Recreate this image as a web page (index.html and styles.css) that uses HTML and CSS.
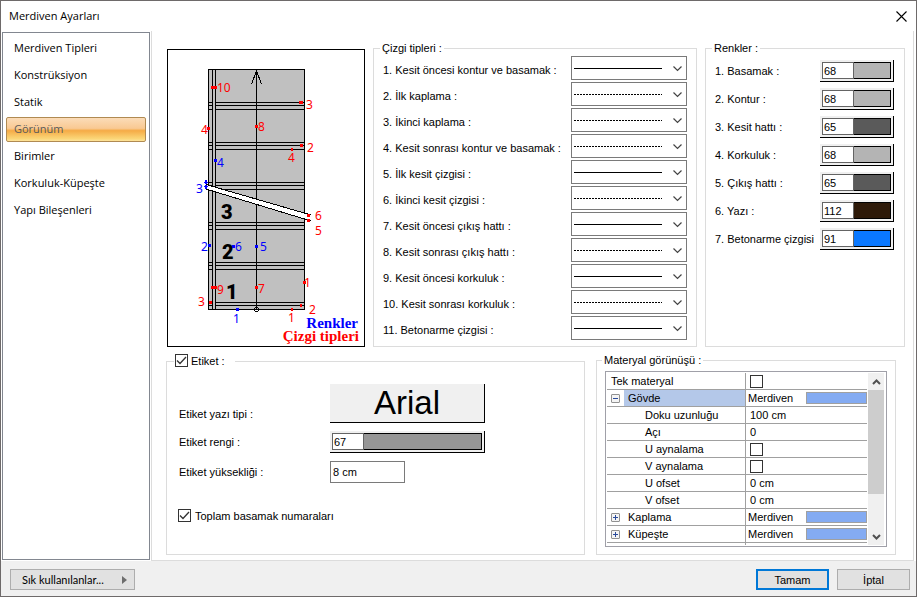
FILE: index.html
```
<!DOCTYPE html>
<html lang="tr">
    <head>
        <title>Merdiven Ayarları</title>
        <meta charset="utf-8">
        <link rel="stylesheet" href="styles.css">
    </head>
    <body>

    <div class="dialog">
        <div class="titlebar">
            <h1>Merdiven Ayarları</h1>
            <button class="close" type="button" aria-label="Kapat">
                <svg width="11" height="11" viewBox="0 0 11 11"><path d="M.5 .5l10 10M10.5 .5l-10 10" fill="none" stroke="#000" stroke-width="1.100"/></svg>
            </button>
        </div>

        <div class="main">
            <nav class="menu">
                <a href="#tipler">Merdiven Tipleri</a>
                <a href="#konstruksiyon">Konstrüksiyon</a>
                <a href="#statik">Statik</a>
                <a href="#gorunum" class="active">Görünüm</a>
                <a href="#birimler">Birimler</a>
                <a href="#korkuluk">Korkuluk-Küpeşte</a>
                <a href="#yapi">Yapı Bileşenleri</a>
            </nav>

            <div class="page">
                <div class="row top">
                    <div class="preview">
                        <svg viewBox="168 50 196 296">
                            <g shape-rendering="crispEdges">
                                <path d="M208.500 69.500h96v240h-96z" fill="#c0c0c0" stroke="#000"/>
                                <!-- basamaklar -->
                                <path d="M208 102.500h96M208 105.500h96M208 109.500h96M208 142.500h96M208 145.500h96M208 149.500h96M208 182.500h96M208 185.500h96M208 189.500h96M208 222.500h96M208 225.500h96M208 229.500h96M208 262.500h96M208 265.500h96M208 269.500h96M208 302.500h96M208 305.500h96" fill="none" stroke="#000"/>
                                <!-- korkuluk -->
                                <path d="M212.500 69.500h3v240h-3z" fill="#c0c0c0" stroke="#000"/>
                                <!-- çıkış hattı -->
                                <path d="M256.500 69v240M256.500 71l-5 13M256.500 71l5 13M255 72.500h3" fill="none" stroke="#000"/>
                                <path d="M255 307.500h3M255 311.500h3M254.500 308v3M258.500 308v3" fill="none" stroke="#000"/>
                                <!-- kesit -->
                                <path d="M206 184.500L311 215V221L206 189Z" fill="#fff"/>
                                <path d="M206 184.500L311 215M206 189L311 221" fill="none" stroke="#000"/>
                                <path fill="#f00" d="M211 86h6v3h-6zM299 101h4v3h-4zM207 127h3v3h-3zM255 125h3v3h-3zM300 144h3v3h-3zM291 148h2v3h-2zM307 214h3v3h-3zM307 219h3v3h-3zM211 286h6v3h-6zM255 286h3v3h-3zM303 281h3v3h-3zM209 301h3v3h-3zM300 304h2v3h-2zM291 308h2v3h-2z"/>
                                <path fill="#00f" d="M214 159h3v3h-3zM205 180h2v4h-2zM205 185h2v4h-2zM204 182h4v1h-4zM204 186h4v1h-4zM208 244h3v3h-3zM232 245h3v3h-3zM255 245h3v3h-3zM236 308h3v3h-3z"/>
                            </g>
                            <g class="step">
                                <text x="221" y="219">3</text>
                                <text x="222" y="259">2</text>
                                <text x="226" y="299">1</text>
                            </g>
                            <g class="mark red">
                                <text x="217" y="92">10</text>
                                <text x="306" y="109">3</text>
                                <text x="258" y="131">8</text>
                                <text x="201" y="134">4</text>
                                <text x="307" y="152">2</text>
                                <text x="288" y="162">4</text>
                                <text x="315" y="220">6</text>
                                <text x="315" y="235">5</text>
                                <text x="217" y="294">9</text>
                                <text x="258" y="293">7</text>
                                <text x="304" y="287">1</text>
                                <text x="198" y="306">3</text>
                                <text x="309" y="314">2</text>
                                <text x="288" y="322">1</text>
                            </g>
                            <g class="mark blue">
                                <text x="217" y="167">4</text>
                                <text x="196" y="193">3</text>
                                <text x="201" y="251">2</text>
                                <text x="235" y="251">6</text>
                                <text x="260" y="251">5</text>
                                <text x="233" y="323">1</text>
                            </g>
                            <g class="caption">
                                <text class="blue" x="358" y="328" text-anchor="end">Renkler</text>
                                <text class="red" x="359" y="341" text-anchor="end">Çizgi tipleri</text>
                            </g>
                        </svg>
                    </div>

                    <fieldset class="lines">
                        <legend>Çizgi tipleri :</legend>
                        <div class="line"><label for="l1">1. Kesit öncesi kontur ve basamak :</label><select id="l1" class="solid"><option></option></select></div>
                        <div class="line"><label for="l2">2. İlk kaplama :</label><select id="l2" class="dashed"><option></option></select></div>
                        <div class="line"><label for="l3">3. İkinci kaplama :</label><select id="l3" class="dashed"><option></option></select></div>
                        <div class="line"><label for="l4">4. Kesit sonrası kontur ve basamak :</label><select id="l4" class="dashed"><option></option></select></div>
                        <div class="line"><label for="l5">5. İlk kesit çizgisi :</label><select id="l5" class="solid"><option></option></select></div>
                        <div class="line"><label for="l6">6. İkinci kesit çizgisi :</label><select id="l6" class="dashed"><option></option></select></div>
                        <div class="line"><label for="l7">7. Kesit öncesi çıkış hattı :</label><select id="l7" class="solid"><option></option></select></div>
                        <div class="line"><label for="l8">8. Kesit sonrası çıkış hattı :</label><select id="l8" class="dashed"><option></option></select></div>
                        <div class="line"><label for="l9">9. Kesit öncesi korkuluk :</label><select id="l9" class="solid"><option></option></select></div>
                        <div class="line"><label for="l10">10. Kesit sonrası korkuluk :</label><select id="l10" class="dashed"><option></option></select></div>
                        <div class="line"><label for="l11">11. Betonarme çizgisi :</label><select id="l11" class="solid"><option></option></select></div>
                    </fieldset>

                    <fieldset class="colors">
                        <legend>Renkler :</legend>
                        <div class="color"><label for="c1">1. Basamak :</label><button id="c1" class="picker" type="button"><span>68</span><i class="c68"></i></button></div>
                        <div class="color"><label for="c2">2. Kontur :</label><button id="c2" class="picker" type="button"><span>68</span><i class="c68"></i></button></div>
                        <div class="color"><label for="c3">3. Kesit hattı :</label><button id="c3" class="picker" type="button"><span>65</span><i class="c65"></i></button></div>
                        <div class="color"><label for="c4">4. Korkuluk :</label><button id="c4" class="picker" type="button"><span>68</span><i class="c68"></i></button></div>
                        <div class="color"><label for="c5">5. Çıkış hattı :</label><button id="c5" class="picker" type="button"><span>65</span><i class="c65"></i></button></div>
                        <div class="color"><label for="c6">6. Yazı :</label><button id="c6" class="picker" type="button"><span>112</span><i class="c112"></i></button></div>
                        <div class="color"><label for="c7">7. Betonarme çizgisi</label><button id="c7" class="picker" type="button"><span>91</span><i class="c91"></i></button></div>
                    </fieldset>
                </div>

                <div class="row bottom">
                    <fieldset class="tag">
                        <legend><input type="checkbox" id="etiket" checked><label for="etiket">Etiket :</label></legend>
                        <div class="tagGrid">
                            <label for="font">Etiket yazı tipi :</label>
                            <button id="font" class="font" type="button">Arial</button>
                            <label for="renk">Etiket rengi :</label>
                            <button id="renk" class="picker" type="button"><span>67</span><i class="c67"></i></button>
                            <label for="yukseklik">Etiket yüksekliği :</label>
                            <input id="yukseklik" class="text" type="text" value="8 cm">
                        </div>
                        <div class="check"><input type="checkbox" id="toplam" checked><label for="toplam">Toplam basamak numaraları</label></div>
                    </fieldset>

                    <fieldset class="material">
                        <legend>Materyal görünüşü :</legend>
                        <div class="list">
                            <div class="rows">
                                <table>
                                    <tbody>
                                        <tr><th><label for="tek">Tek materyal</label></th><td><input type="checkbox" id="tek"></td></tr>
                                        <tr class="group selected"><th><div><button class="toggle minus" type="button" aria-label="Daralt"></button><span>Gövde</span></div></th><td><div>Merdiven<i class="swatch"></i></div></td></tr>
                                        <tr class="child"><th>Doku uzunluğu</th><td>100 cm</td></tr>
                                        <tr class="child"><th>Açı</th><td>0</td></tr>
                                        <tr class="child"><th><label for="u">U aynalama</label></th><td><input type="checkbox" id="u"></td></tr>
                                        <tr class="child"><th><label for="v">V aynalama</label></th><td><input type="checkbox" id="v"></td></tr>
                                        <tr class="child"><th>U ofset</th><td>0 cm</td></tr>
                                        <tr class="child"><th>V ofset</th><td>0 cm</td></tr>
                                        <tr class="group"><th><div><button class="toggle plus" type="button" aria-label="Genişlet"></button><span>Kaplama</span></div></th><td><div>Merdiven<i class="swatch"></i></div></td></tr>
                                        <tr class="group"><th><div><button class="toggle plus" type="button" aria-label="Genişlet"></button><span>Küpeşte</span></div></th><td><div>Merdiven<i class="swatch"></i></div></td></tr>
                                        <tr class="group"><th><div></div></th><td><div><i class="swatch"></i></div></td></tr>
                                    </tbody>
                                </table>
                            </div>
                            <div class="scrollbar">
                                <button type="button" aria-label="Yukarı"><svg width="9" height="6" viewBox="0 0 9 6"><path d="M1 5l3.500-3.500L8 5" fill="none" stroke="#505050" stroke-width="2"/></svg></button>
                                <div class="track"><div class="thumb"></div></div>
                                <button type="button" aria-label="Aşağı"><svg width="9" height="6" viewBox="0 0 9 6"><path d="M1 1l3.500 3.500L8 1" fill="none" stroke="#505050" stroke-width="2"/></svg></button>
                            </div>
                        </div>
                    </fieldset>
                </div>
            </div>
        </div>

        <div class="footer">
            <button class="btn favorites" type="button">Sık kullanılanlar...<svg width="5" height="8" viewBox="0 0 5 8"><path d="M0 0l5 4-5 4z" fill="#6d6d6d"/></svg></button>
            <button class="btn default" type="button">Tamam</button>
            <button class="btn" type="button">İptal</button>
        </div>
    </div>

    </body>
</html>
```
FILE: styles.css
```
* {
    box-sizing: border-box;
}

body {
    margin: 0;
    background-color: #f0f0f0;
}

body, button, input, select, table {
    font-family: "Liberation Sans", Arial, sans-serif;
    font-size: 11px;
    line-height: 14px;
    color: #000;
}

button {
    margin: 0;
    padding: 0;
    border: 0;
}

.dialog {
    display: flex;
    flex-direction: column;
    min-height: 100vh;
    border: 1px solid #6e6a6a;
    background-color: #f0f0f0;
}

.titlebar {
    display: flex;
    align-items: center;
    justify-content: space-between;
    height: 30px;
    padding: 0 9px 0 8px;
    background-color: #fff;
}

.titlebar h1 {
    margin: 0;
    font-family: "Open Sans", "Segoe UI", sans-serif;
    font-size: 11px;
    font-weight: normal;
}

.close {
    display: flex;
    background: none;
}

.main {
    display: flex;
    flex: 1;
    background-color: #fff;
}

/**** MENU ****/

.menu {
    display: flex;
    flex-direction: column;
    gap: 2px;
    flex: 0 0 148px;
    margin: 1px;
    padding: 3px;
    border: 1px solid #828790;
    background-color: #fff;
}

.menu a {
    height: 25px;
    padding: 0 7px;
    border: 1px solid transparent;
    font-family: "Open Sans", "Segoe UI", sans-serif;
    line-height: 22px;
    color: #000;
    text-decoration: none;
}

.menu a.active {
    border-color: #b08a52;
    border-radius: 2px;
    background: linear-gradient(#fbdcb8, #f9c993 45%, #f5ab46 55%, #fbd678 90%, #fde39b);
    color: #5a5a5a;
}

/**** PAGE ****/

.page {
    flex: 1;
    margin-right: 2px;
    padding: 10px 8px 5px 14px;
    border: 1px solid #dcdcdc;
    border-top: 0;
}

.row {
    display: grid;
}

.top {
    grid-template-columns: 199px minmax(0, 324fr) minmax(0, 200fr);
    gap: 8px;
}

.bottom {
    grid-template-columns: minmax(0, 419fr) minmax(0, 300fr);
    gap: 11px;
    margin-top: 6px;
    padding-right: 9px;
}

fieldset {
    min-width: 0;
    margin: 0;
    padding: 0;
    border: 1px solid #dcdcdc;
}

legend {
    margin-left: -3px;
    padding: 0 2px;
}

.preview {
    margin: 8px 0 0 1px;
    border: 1px solid #000;
}

.preview svg {
    display: block;
    width: 196px;
    height: 296px;
}

.red {
    fill: #f00;
}

.blue {
    fill: #00f;
}

.mark {
    font-family: "Noto Sans", Tahoma, sans-serif;
    font-size: 12px;
}

.step {
    font-family: Roboto, sans-serif;
    font-size: 20px;
    font-weight: 900;
}

.caption {
    font-family: "Liberation Serif", serif;
    font-size: 15px;
    font-weight: bold;
}

.lines {
    padding: 1px 9px 3px;
}

.line {
    display: flex;
    justify-content: space-between;
    margin-bottom: 2px;
}

.line label {
    padding-top: 7px;
}

.line select {
    width: 116px;
    height: 24px;
    margin: 0;
    border: 1px solid #7a7a7a;
    border-radius: 0;
    appearance: none;
    background-color: #fff;
    background-repeat: no-repeat;
    background-position: right 4px top 9px, 2px 11px;
    background-size: 9px 6px, 88px 1px;
}

.line .solid {
    background-image: url("data:image/svg+xml,%3Csvg xmlns='http://www.w3.org/2000/svg' viewBox='0 0 9 6'%3E%3Cpath d='M.5 .5l4 4 4-4' fill='none' stroke='%23444' stroke-width='1.200'/%3E%3C/svg%3E"), linear-gradient(#000, #000);
}

.line .dashed {
    background-image: url("data:image/svg+xml,%3Csvg xmlns='http://www.w3.org/2000/svg' viewBox='0 0 9 6'%3E%3Cpath d='M.5 .5l4 4 4-4' fill='none' stroke='%23444' stroke-width='1.200'/%3E%3C/svg%3E"), repeating-linear-gradient(90deg, #000 0 2px, #fff 2px 3px);
}

.colors {
    padding: 5px 10px 0 9px;
}

.color {
    display: flex;
    align-items: center;
    justify-content: space-between;
    margin-bottom: 6px;
}

.picker {
    display: flex;
    width: 74px;
    height: 22px;
    padding: 2px;
    border-right: 1px solid #000;
    border-bottom: 1px solid #000;
    background-color: #f0f0f0;
    text-align: left;
}

.picker span {
    width: 32px;
    height: 17px;
    padding-left: 1px;
    border: 1px solid #646464;
    background-color: #fff;
    line-height: 16px;
}

.picker i {
    flex: 1;
    height: 17px;
    border: 1px solid #000;
    border-left: 0;
}

.c65 { background-color: #5a5a5a; }
.c67 { background-color: #969696; }
.c68 { background-color: #b4b4b4; }
.c91 { background-color: #0a78ff; }
.c112 { background-color: #2d1908; }

/**** LABEL ****/

input[type=checkbox] {
    flex: none;
    display: block;
    width: 13px;
    height: 13px;
    margin: 0;
    border: 1px solid #333;
    appearance: none;
    background-color: #fff;
}

input[type=checkbox]:checked {
    background-image: url("data:image/svg+xml,%3Csvg xmlns='http://www.w3.org/2000/svg' viewBox='0 0 11 11'%3E%3Cpath d='M1 5.500l3 3 6-6.500' fill='none' stroke='%23333' stroke-width='1.300'/%3E%3C/svg%3E");
}

.tag {
    margin-top: 1px;
}

.tag legend {
    display: flex;
    gap: 3px;
    margin-left: 7px;
    padding: 0 10px 0 1px;
}

.tagGrid {
    display: grid;
    grid-template-columns: 151px 155px;
    gap: 8px 0;
    align-items: center;
    margin: 16px 0 0 12px;
}

.font {
    height: 39px;
    border-right: 1px solid #000;
    border-bottom: 1px solid #000;
    background-color: #f0f0f0;
    font-size: 33px;
    line-height: 38px;
}

.font, .tagGrid .picker {
    width: 100%;
}

.tagGrid label[for=font] {
    align-self: end;
    padding-bottom: 2px;
}

.text {
    width: 75px;
    height: 22px;
    padding: 0 2px;
    border: 1px solid #7a7a7a;
}

.check {
    display: flex;
    gap: 4px;
    margin: 26px 0 0 11px;
}

/**** MATERIAL ****/

.material {
    padding: 4px 8px 7px;
}

.list {
    display: flex;
    height: 176px;
    padding: 1px;
    border: 1px solid #a0a0a8;
}

.rows {
    flex: 1;
    overflow: hidden;
}

.rows table {
    width: 100%;
    table-layout: fixed;
    border-spacing: 0;
}

.rows th, .rows td {
    height: 17px;
    padding: 0 0 0 4px;
    border-bottom: 1px solid #a0a0a0;
    font-weight: normal;
    text-align: left;
}

.rows th {
    width: 139px;
    border-right: 1px solid #a0a0a0;
}

.rows td {
    padding-left: 4px;
}

.rows .child th {
    padding-left: 38px;
}

.rows .group th, .rows .group td {
    padding-left: 0;
}

.rows .group div {
    display: flex;
    align-items: center;
    height: 16px;
}

.rows .group th span {
    flex: 1;
    padding-left: 4px;
    line-height: 16px;
}

.rows .group td div {
    justify-content: space-between;
    padding-left: 2px;
}

.rows .selected th span {
    background-color: #b4c8e9;
}

.toggle {
    width: 9px;
    height: 9px;
    margin: 0 4px;
    border: 1px solid #919191;
    border-radius: 1px;
    background: linear-gradient(#2b4b9b, #2b4b9b) center / 5px 1px no-repeat #f4f4f4;
}

.plus {
    background: linear-gradient(#2b4b9b, #2b4b9b) center / 5px 1px no-repeat, linear-gradient(#2b4b9b, #2b4b9b) center / 1px 5px no-repeat, #f4f4f4;
}

.swatch {
    width: 61px;
    height: 12px;
    margin-left: auto;
    border: 1px solid #a0a0a0;
    background-color: #84abf2;
}

.scrollbar {
    display: flex;
    flex-direction: column;
    flex: 0 0 18px;
    padding: 0 1px;
    background-color: #fff;
}

.scrollbar button {
    display: flex;
    align-items: center;
    justify-content: center;
    height: 17px;
    background-color: #f0f0f0;
}

.track {
    flex: 1;
    background-color: #f0f0f0;
}

.thumb {
    height: 75%;
    background-color: #cdcdcd;
}

/**** FOOTER ****/

.footer {
    display: flex;
    gap: 8px;
    padding: 8px 6px 6px 9px;
}

.btn {
    width: 73px;
    height: 21px;
    border: 1px solid #adadad;
    background-color: #e1e1e1;
}

.favorites {
    display: flex;
    align-items: center;
    justify-content: space-between;
    width: 125px;
    margin-right: auto;
    padding: 0 7px 0 11px;
    font-family: Lato, "Segoe UI", sans-serif;
}

.default {
    border: 2px solid #0078d7;
}
```
